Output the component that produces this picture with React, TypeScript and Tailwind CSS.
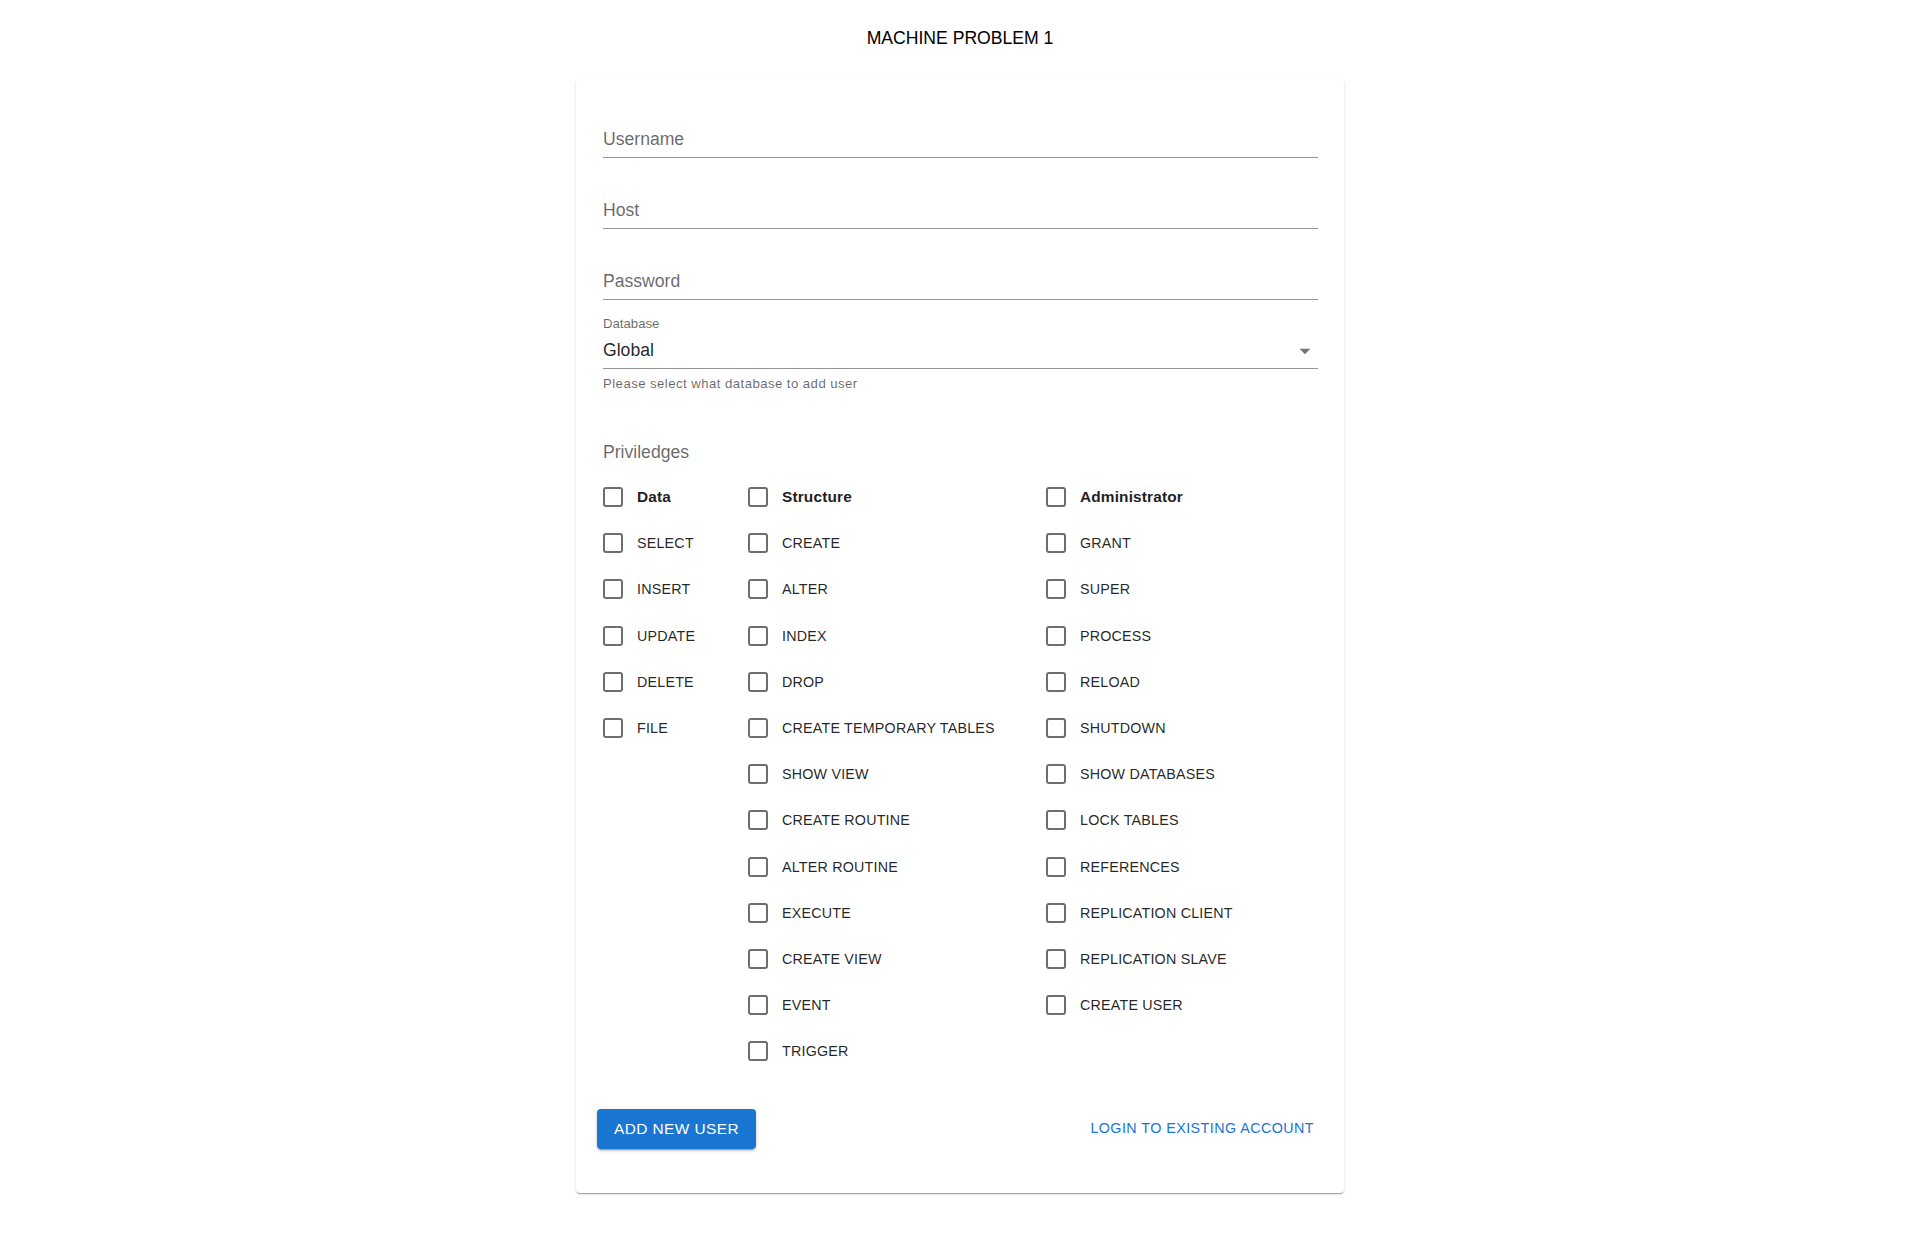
import React from "react";

const dataPrivs = ["SELECT", "INSERT", "UPDATE", "DELETE", "FILE"];
const structurePrivs = [
  "CREATE",
  "ALTER",
  "INDEX",
  "DROP",
  "CREATE TEMPORARY TABLES",
  "SHOW VIEW",
  "CREATE ROUTINE",
  "ALTER ROUTINE",
  "EXECUTE",
  "CREATE VIEW",
  "EVENT",
  "TRIGGER",
];
const adminPrivs = [
  "GRANT",
  "SUPER",
  "PROCESS",
  "RELOAD",
  "SHUTDOWN",
  "SHOW DATABASES",
  "LOCK TABLES",
  "REFERENCES",
  "REPLICATION CLIENT",
  "REPLICATION SLAVE",
  "CREATE USER",
];

function Check({ label, bold }: { label: string; bold?: boolean }) {
  return (
    <label className="flex h-[46.2px] cursor-pointer items-center">
      <span className="h-[20px] w-[20px] shrink-0 rounded-[3px] border-2 border-[#6e6e6e]" />
      <span
        className={`ml-[14px] whitespace-nowrap leading-[22px] ${
          bold
            ? "text-[15.4px] font-bold tracking-[0.16px] text-[#1f1f1f]"
            : "text-[14.3px] tracking-[0.2px] text-[rgba(0,0,0,0.87)]"
        }`}
      >
        {label}
      </span>
    </label>
  );
}

function Column({ title, items }: { title: string; items: string[] }) {
  return (
    <div className="flex flex-col">
      <Check label={title} bold />
      {items.map((p) => (
        <Check key={p} label={p} />
      ))}
    </div>
  );
}

function Field({ label, type = "text", first }: { label: string; type?: string; first?: boolean }) {
  return (
    <div className={`${first ? "" : "mt-[18px]"} border-b border-[rgba(0,0,0,0.42)] pt-[22px] pb-[5px]`}>
      <input
        type={type}
        placeholder={label}
        className="block h-[25px] w-full bg-transparent text-[17.6px] text-[rgba(0,0,0,0.87)] outline-none placeholder:text-[rgba(0,0,0,0.6)]"
      />
    </div>
  );
}

export default function App() {
  return (
    <div className="min-h-[1237px] bg-white font-['Liberation_Sans',Arial,sans-serif]">
      <h6 className="pt-[25px] text-center text-[17.6px] leading-[26px] text-black">MACHINE PROBLEM 1</h6>

      <div className="mx-auto mt-[28px] w-[768px] rounded-[4px] bg-white pt-[26px] pr-[26px] pb-[44px] pl-[27px] shadow-[0px_2px_1px_-1px_rgba(0,0,0,0.2),0px_1px_1px_0px_rgba(0,0,0,0.14),0px_1px_3px_0px_rgba(0,0,0,0.12)]">
        <Field label="Username" first />
        <Field label="Host" />
        <Field label="Password" type="password" />

        {/* Database select */}
        <div className="mt-[16px]">
          <div className="text-[13.2px] leading-[16px] text-[rgba(0,0,0,0.6)]">Database</div>
          <div className="mt-[6px] flex items-center border-b border-[rgba(0,0,0,0.42)] pb-[5px]">
            <span className="h-[25px] flex-1 text-[17.6px] leading-[25px] text-[rgba(0,0,0,0.87)]">Global</span>
            <svg width="26" height="26" viewBox="0 0 24 24" className="-my-[1px] fill-[#757575]">
              <path d="M7 10l5 5 5-5z" />
            </svg>
          </div>
          <p className="mt-[6.5px] text-[13.2px] leading-[16px] tracking-[0.44px] text-[rgba(0,0,0,0.6)]">
            Please select what database to add user
          </p>
        </div>

        {/* Privileges */}
        <div className="mt-[48px] text-[17.6px] leading-[25px] text-[rgba(0,0,0,0.6)]">Priviledges</div>
        <div className="mt-[9.5px] grid grid-cols-[145px_298px_1fr]">
          <Column title="Data" items={dataPrivs} />
          <Column title="Structure" items={structurePrivs} />
          <Column title="Administrator" items={adminPrivs} />
        </div>

        {/* Actions */}
        <div className="-mx-[6px] mt-[34.6px] flex items-center justify-between">
          <button className="h-[40px] rounded-[4px] bg-[#1976d2] px-[17px] text-[15.4px] tracking-[0.44px] text-white uppercase shadow-[0px_3px_1px_-2px_rgba(0,0,0,0.2),0px_2px_2px_0px_rgba(0,0,0,0.14),0px_1px_5px_0px_rgba(0,0,0,0.12)]">
            Add new user
          </button>
          <button className="h-[34px] rounded-[4px] px-[10px] text-[14.3px] tracking-[0.45px] text-[#1976d2] uppercase">
            Login to existing account
          </button>
        </div>
      </div>
    </div>
  );
}
